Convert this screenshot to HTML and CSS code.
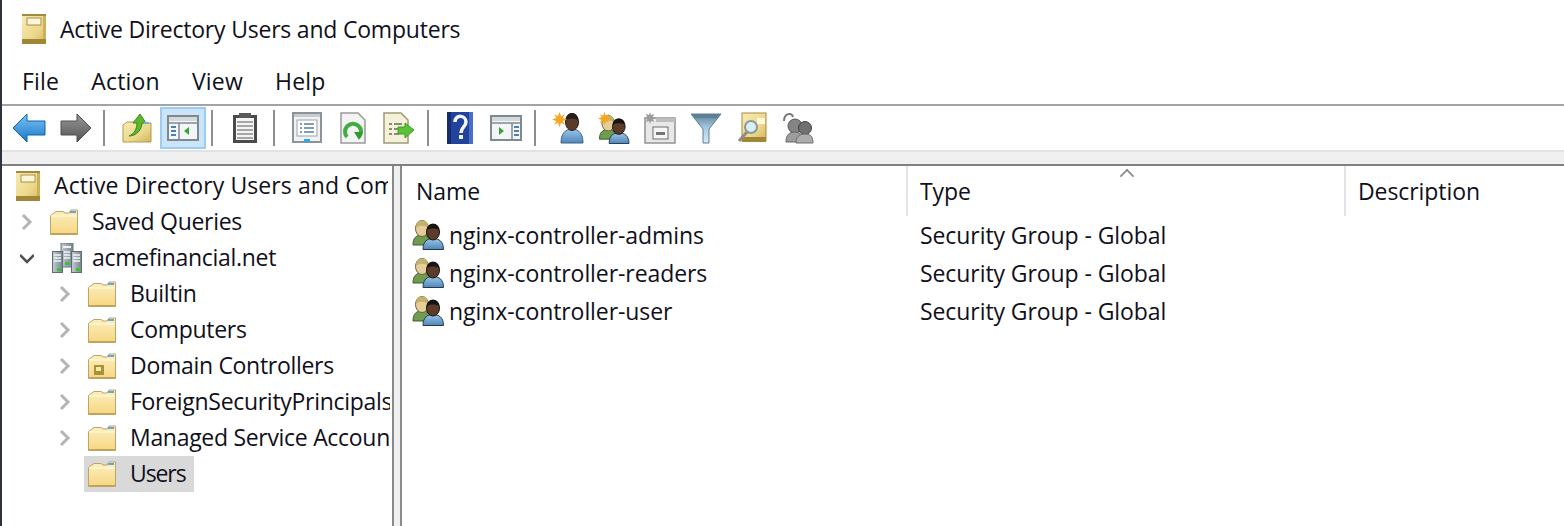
FILE: index.html
```html
<!DOCTYPE html>
<html lang="en">
<head>
  <meta charset="UTF-8">
  <meta name="viewport" content="width=device-width, initial-scale=1.0">
  <title>Active Directory Users and Computers</title>
  <link rel="stylesheet" href="styles.css">
</head>
<body>
  <svg class="defs" width="0" height="0">
    <defs>
      <linearGradient id="gold" x1="0" y1="0" x2="1" y2="1">
        <stop offset="0" stop-color="#f8ecb4"/><stop offset="0.6" stop-color="#ecd88c"/><stop offset="1" stop-color="#d2b45c"/>
      </linearGradient>
      <linearGradient id="fold" x1="0" y1="0" x2="0" y2="1">
        <stop offset="0" stop-color="#fdf0c0"/><stop offset="1" stop-color="#f6d682"/>
      </linearGradient>
      <linearGradient id="blue" x1="0" y1="0" x2="0" y2="1">
        <stop offset="0" stop-color="#7cc4f4"/><stop offset="1" stop-color="#1778c8"/>
      </linearGradient>
      <linearGradient id="grey" x1="0" y1="0" x2="0" y2="1">
        <stop offset="0" stop-color="#989898"/><stop offset="1" stop-color="#545454"/>
      </linearGradient>
      <linearGradient id="funnel" x1="0" y1="0" x2="0" y2="1">
        <stop offset="0" stop-color="#5f7f97"/><stop offset="0.5" stop-color="#a6cde4"/><stop offset="1" stop-color="#dceaf4"/>
      </linearGradient>
      <linearGradient id="shirt" x1="0" y1="0" x2="0" y2="1">
        <stop offset="0" stop-color="#9cc6ea"/><stop offset="1" stop-color="#4f86b8"/>
      </linearGradient>
      <linearGradient id="server" x1="0" y1="0" x2="1" y2="0">
        <stop offset="0" stop-color="#c4ced3"/><stop offset="1" stop-color="#76848c"/>
      </linearGradient>

      <symbol id="i-snapin" viewBox="0 0 24 30">
        <rect width="24" height="30" fill="url(#gold)"/>
        <rect x="21" width="3" height="30" fill="#cdb05a"/>
        <rect width="24" height="2" fill="#a58a3c"/>
        <rect y="25" width="24" height="5" fill="#a08636"/>
        <rect x="5" y="4" width="14" height="7" fill="#fbf6d8" stroke="#a8924c"/>
      </symbol>

      <symbol id="i-folder" viewBox="0 0 28 26">
        <path d="M.5 25.500V6.500L6 2.500h7l2 1.500h4l2-3h6.500v24.500z" fill="url(#fold)" stroke="#bfa468"/>
        <path d="M1 7h26" stroke="#fff6d2" stroke-width="1.500"/>
        <rect x="20" y="2" width="6" height="2" fill="#5aa9e6"/>
        <rect x=".5" y="24" width="27" height="1.500" fill="#c4a05a"/>
      </symbol>

      <symbol id="i-dc-folder" viewBox="0 0 28 26">
        <use href="#i-folder"/>
        <rect x="6" y="12" width="10" height="10" fill="#a8923a"/>
        <rect x="8" y="14" width="5" height="4" fill="#f1e9a6"/>
      </symbol>

      <symbol id="i-domain" viewBox="0 0 30 30">
        <rect x="9" y="0" width="12" height="24" fill="url(#server)" stroke="#6a777e"/>
        <rect x="11" y="3" width="8" height="2" fill="#eef2f3"/>
        <rect x="0.500" y="8.500" width="10" height="21" fill="url(#server)" stroke="#5f6c73"/>
        <rect x="19.500" y="8.500" width="10" height="21" fill="url(#server)" stroke="#5f6c73"/>
        <path d="M2 12h7M2 15h7M2 18h7M21 12h7M21 15h7M21 18h7M12 9h6M12 12h6M12 15h6" stroke="#f2f5f6" stroke-width="1.500"/>
        <rect x="5" y="25" width="4" height="3" fill="#36c52f"/>
        <rect x="24" y="25" width="4" height="3" fill="#36c52f"/>
        <rect x="13" y="19" width="4" height="3" fill="#36c52f"/>
      </symbol>

      <symbol id="i-group" viewBox="0 0 32 30">
        <path d="M1 25c0-7 3-10 9-10s9 3 9 10z" fill="#6f9c50" stroke="#38602a"/>
        <ellipse cx="10" cy="8.500" rx="6.500" ry="8" fill="#e6cd9c" stroke="#6e6238"/>
        <path d="M4 8c0-6 3-7.500 6-7.500s6 1.500 6 7.500c-3-3-9-3-12 0z" fill="#c4b26c"/>
        <path d="M11 29.500c0-8 4-11 10-11s10.500 3 10.500 11z" fill="url(#shirt)" stroke="#26394a"/>
        <ellipse cx="21" cy="12" rx="6.500" ry="8" fill="#5d3b2a" stroke="#1a110c"/>
        <path d="M15 10c0-5 3-6 6-6s6 1 6 6c-3-2-9-2-12 0z" fill="#181412"/>
      </symbol>

      <symbol id="i-back" viewBox="0 0 34 30">
        <path d="M1 15 15 1v7h18v14H15v7z" fill="url(#blue)" stroke="#0f62a8"/>
      </symbol>
      <symbol id="i-fwd" viewBox="0 0 34 30">
        <path d="M33 15 19 1v7H3v14h16v7z" fill="url(#grey)" stroke="#4e4e4e"/>
      </symbol>
      <symbol id="i-up" viewBox="0 0 30 30">
        <path d="M1 29V12l4-3h8l2 1h14v19z" fill="url(#gold)" stroke="#b3994f"/>
        <path d="M7 23c5-2 8-7 8-13h-4l7-9 6 9h-4c0 6-5 13-13 13z" fill="#5fb52c" stroke="#3a8a18"/>
        <rect x="22" y="9" width="5" height="2" fill="#6fb2e6"/>
      </symbol>
      <symbol id="i-win" viewBox="0 0 32 26">
        <rect x="1" y="1" width="30" height="24" fill="#f3f5f6" stroke="#7e8a92" stroke-width="2"/>
        <rect x="2" y="2" width="28" height="4" fill="#d4d9dc"/>
        <path d="M2 8h28" stroke="#7e8a92" stroke-width="1.500"/>
      </symbol>
      <symbol id="i-tree" viewBox="0 0 32 26">
        <use href="#i-win"/>
        <path d="M12 8v16" stroke="#7e8a92" stroke-width="1.500"/>
        <path d="M4 12h5M4 16h5M4 20h5" stroke="#4f80ad" stroke-width="2"/>
        <path d="M22 12v8l-5-4z" fill="#35a53a"/>
      </symbol>
      <symbol id="i-cols" viewBox="0 0 32 26">
        <use href="#i-win"/>
        <path d="M22 8v16" stroke="#7e8a92" stroke-width="1.500"/>
        <path d="M24 12h5M24 16h5M24 20h5" stroke="#4f80ad" stroke-width="2"/>
        <path d="M9 12v8l5-4z" fill="#35a53a"/>
      </symbol>
      <symbol id="i-clip" viewBox="0 0 24 30">
        <rect x="1.500" y="3.500" width="21" height="25" fill="#f4f4f4" stroke="#4a4a4a" stroke-width="3"/>
        <rect x="6" y="0" width="12" height="5" fill="#5a5a5a"/>
        <path d="M4 9h16M4 13h16M4 17h16M4 21h16M4 25h16" stroke="#a6a6a6" stroke-width="2"/>
      </symbol>
      <symbol id="i-props" viewBox="0 0 30 32">
        <rect x="1" y="1" width="28" height="29" fill="#f0f2f4" stroke="#8c949a" stroke-width="2"/>
        <rect x="2" y="2" width="26" height="3" fill="#c6ccd0"/>
        <rect x="5" y="8" width="20" height="16" fill="#fff" stroke="#9aa2a8"/>
        <path d="M8 12h2M12 12h10M8 16h2M12 16h10M8 20h2M12 20h10" stroke="#5a7d9a" stroke-width="1.500"/>
        <rect x="12" y="27" width="6" height="3" fill="#2aa8e8"/>
      </symbol>
      <symbol id="i-refresh" viewBox="0 0 26 32">
        <path d="M1 1h17l7 7v23H1z" fill="#f3f3f3" stroke="#9a9a9a" stroke-width="1.500"/>
        <path d="M7 25a8 8 0 1 1 12 0" fill="none" stroke="#3fae3f" stroke-width="4"/>
        <path d="M14 20h9l-4 8z" fill="#2f9a30"/>
      </symbol>
      <symbol id="i-export" viewBox="0 0 32 32">
        <path d="M1 1h17l7 7v23H1z" fill="#f5f1d8" stroke="#a09a7a" stroke-width="1.500"/>
        <path d="M6 12h3M11 12h8M6 17h3M11 17h5M6 22h3M11 22h5" stroke="#6a6a5a" stroke-width="1.500"/>
        <path d="M31 18l-9-7v4h-7v7h7v4z" fill="#5cc23a" stroke="#3f9a26"/>
      </symbol>
      <symbol id="i-help" viewBox="0 0 26 32">
        <rect width="26" height="32" fill="#22439c"/>
        <rect x="0" y="0" width="4" height="32" fill="#152c6e"/>
        <rect x="22" y="0" width="4" height="32" fill="#4a6ec8"/>
        <path d="M8 10c0-8 11-7 11 0 0 5-5 5-5 11" fill="none" stroke="#f4f6fb" stroke-width="3.500"/>
        <rect x="12" y="23" width="4" height="4" fill="#f4f6fb"/>
      </symbol>
      <symbol id="i-burst" viewBox="0 0 14 14">
        <path d="M7 0l1.500 4L12 2l-2 3.500L14 7l-4 1.500L12 12 8.500 10 7 14l-1.500-4L2 12l2-3.500L0 7l4-1.500L2 2l3.500 2z" fill="#f6a623"/>
      </symbol>
      <symbol id="i-newuser" viewBox="0 0 32 32">
        <path d="M9 31c0-9 4-14 11-14s11 5 11 14z" fill="url(#shirt)" stroke="#3c6288"/>
        <ellipse cx="20" cy="10" rx="6.500" ry="8.500" fill="#5d3b2a" stroke="#241812"/>
        <path d="M14 8c0-5 3-7 6-7s6 2 6 7c-4-2-8-2-12 0z" fill="#26201c"/>
        <use href="#i-burst" x="0" y="0" width="15" height="15"/>
      </symbol>
      <symbol id="i-newgroup" viewBox="0 0 32 32">
        <use href="#i-group" x="0" y="3" width="32" height="29"/>
        <use href="#i-burst" x="0" y="0" width="13" height="13"/>
      </symbol>
      <symbol id="i-newou" viewBox="0 0 32 32">
        <path d="M1 31V6h30v25z" fill="#e8e8e8" stroke="#929292" stroke-width="1.500"/>
        <path d="M12 6h19v4H12z" fill="#bdbdbd"/>
        <rect x="9" y="15" width="15" height="12" fill="#f6f6f6" stroke="#6e6e6e"/>
        <rect x="12" y="20" width="9" height="3" fill="#777"/>
        <path d="M6 0l1 3 3-1-1 3 3 1-3 1 1 3-3-1-1 3-1-3-3 1 1-3-3-1 3-1-1-3 3 1z" fill="#9c9c9c"/>
      </symbol>
      <symbol id="i-filter" viewBox="0 0 30 32">
        <path d="M0 2h30L18 17v14h-6V17z" fill="url(#funnel)" stroke="#5d7d95"/>
        <path d="M1 2h28l-3 4H4z" fill="#5f7f97"/>
      </symbol>
      <symbol id="i-find" viewBox="0 0 30 32">
        <rect x="5" y="1" width="24" height="28" fill="url(#gold)" stroke="#a8893c"/>
        <rect x="5" y="25" width="24" height="5" fill="#a08636"/>
        <rect x="20" y="6" width="8" height="6" fill="#fdf8dc"/>
        <circle cx="14" cy="15" r="6" fill="#dbeef5" stroke="#8a9a9a" stroke-width="2"/>
        <path d="M10 20l-8 9" stroke="#8c8c8c" stroke-width="3"/>
      </symbol>
      <symbol id="i-addgroup" viewBox="0 0 32 32">
        <path d="M2 9c0-8 8-9 9-4" fill="none" stroke="#777" stroke-width="2"/>
        <circle cx="13" cy="14" r="7" fill="#858585" stroke="#555"/>
        <circle cx="23" cy="16" r="6.500" fill="#707070" stroke="#444"/>
        <path d="M4 30c0-7 3-10 9-10s7 3 7 10z" fill="#9c9c9c" stroke="#666"/>
        <path d="M14 31c0-6 3-9 9-9s8 3 8 9z" fill="#acacac" stroke="#6e6e6e"/>
      </symbol>
    </defs>
  </svg>

  <div class="window">
    <div class="titlebar">
      <svg class="title-icon"><use href="#i-snapin"/></svg>
      <span>Active Directory Users and Computers</span>
    </div>

    <div class="menubar">
      <span>File</span>
      <span>Action</span>
      <span>View</span>
      <span>Help</span>
    </div>

    <div class="toolbar">
      <div class="tool"><svg class="ic-back"><use href="#i-back"/></svg></div>
      <div class="tool"><svg class="ic-back"><use href="#i-fwd"/></svg></div>
      <div class="tool-sep"></div>
      <div class="tool"><svg class="ic-up"><use href="#i-up"/></svg></div>
      <div class="tool active"><svg class="ic-win"><use href="#i-tree"/></svg></div>
      <div class="tool-sep"></div>
      <div class="tool"><svg class="ic-clip"><use href="#i-clip"/></svg></div>
      <div class="tool-sep"></div>
      <div class="tool"><svg class="ic-square"><use href="#i-props"/></svg></div>
      <div class="tool"><svg class="ic-page"><use href="#i-refresh"/></svg></div>
      <div class="tool"><svg class="ic-square"><use href="#i-export"/></svg></div>
      <div class="tool-sep tight"></div>
      <div class="tool"><svg class="ic-page"><use href="#i-help"/></svg></div>
      <div class="tool"><svg class="ic-win"><use href="#i-cols"/></svg></div>
      <div class="tool-sep"></div>
      <div class="tool"><svg class="ic-square"><use href="#i-newuser"/></svg></div>
      <div class="tool"><svg class="ic-square"><use href="#i-newgroup"/></svg></div>
      <div class="tool"><svg class="ic-square"><use href="#i-newou"/></svg></div>
      <div class="tool"><svg class="ic-square"><use href="#i-filter"/></svg></div>
      <div class="tool"><svg class="ic-square"><use href="#i-find"/></svg></div>
      <div class="tool"><svg class="ic-square"><use href="#i-addgroup"/></svg></div>
    </div>

    <div class="strip"></div>

    <div class="panes">
      <div class="tree">
        <div class="tree-clip">
          <div class="node root">
            <svg class="ic-snapin"><use href="#i-snapin"/></svg>
            <span>Active Directory Users and Computers</span>
          </div>
          <div class="node lvl1">
            <svg class="chev"><path d="M3 2l7 7-7 7" fill="none" stroke="#b4b4b4" stroke-width="3"/></svg>
            <svg class="ic-folder"><use href="#i-folder"/></svg>
            <span>Saved Queries</span>
          </div>
          <div class="node lvl1">
            <svg class="chev"><path d="M0 6l7 7 7-7" fill="none" stroke="#505050" stroke-width="2.500"/></svg>
            <svg class="ic-domain"><use href="#i-domain"/></svg>
            <span>acmefinancial.net</span>
          </div>
          <div class="node lvl2">
            <svg class="chev"><path d="M3 2l7 7-7 7" fill="none" stroke="#b4b4b4" stroke-width="3"/></svg>
            <svg class="ic-folder"><use href="#i-folder"/></svg>
            <span>Builtin</span>
          </div>
          <div class="node lvl2">
            <svg class="chev"><path d="M3 2l7 7-7 7" fill="none" stroke="#b4b4b4" stroke-width="3"/></svg>
            <svg class="ic-folder"><use href="#i-folder"/></svg>
            <span>Computers</span>
          </div>
          <div class="node lvl2">
            <svg class="chev"><path d="M3 2l7 7-7 7" fill="none" stroke="#b4b4b4" stroke-width="3"/></svg>
            <svg class="ic-folder"><use href="#i-dc-folder"/></svg>
            <span>Domain Controllers</span>
          </div>
          <div class="node lvl2">
            <svg class="chev"><path d="M3 2l7 7-7 7" fill="none" stroke="#b4b4b4" stroke-width="3"/></svg>
            <svg class="ic-folder"><use href="#i-folder"/></svg>
            <span>ForeignSecurityPrincipals</span>
          </div>
          <div class="node lvl2">
            <svg class="chev"><path d="M3 2l7 7-7 7" fill="none" stroke="#b4b4b4" stroke-width="3"/></svg>
            <svg class="ic-folder"><use href="#i-folder"/></svg>
            <span>Managed Service Accounts</span>
          </div>
          <div class="node lvl2">
            <div class="chev"></div>
            <div class="selected">
              <svg class="ic-folder"><use href="#i-folder"/></svg>
              <span>Users</span>
            </div>
          </div>
        </div>
      </div>

      <div class="splitter"></div>

      <div class="list">
        <div class="list-head">
          <div class="col col-name">Name</div>
          <div class="col col-type">Type<i class="sort"></i></div>
          <div class="col col-desc">Description</div>
        </div>
        <div class="row">
          <div class="cell-name"><svg class="ic-group"><use href="#i-group"/></svg><span>nginx-controller-admins</span></div>
          <div class="cell-type">Security Group - Global</div>
        </div>
        <div class="row">
          <div class="cell-name"><svg class="ic-group"><use href="#i-group"/></svg><span>nginx-controller-readers</span></div>
          <div class="cell-type">Security Group - Global</div>
        </div>
        <div class="row">
          <div class="cell-name"><svg class="ic-group"><use href="#i-group"/></svg><span>nginx-controller-user</span></div>
          <div class="cell-type">Security Group - Global</div>
        </div>
      </div>
    </div>
  </div>
</body>
</html>
```

FILE: styles.css
```css
html, body {
  margin: 0;
  height: 100%;
}
body {
  font-family: "Open Sans", "Noto Sans", sans-serif;
  font-size: 23px;
  letter-spacing: -0.3px;
  color: #10101a;
  background: #fff;
  overflow: hidden;
}
.defs {
  display: block;
  position: absolute;
}
.window {
  height: 526px;
  display: flex;
  flex-direction: column;
  border-left: 2px solid #2e333b;
  overflow: hidden;
}

.titlebar {
  height: 60px;
  flex: none;
  display: flex;
  align-items: center;
  gap: 14px;
  padding-left: 20px;
  letter-spacing: -0.21px;
}
.titlebar span { padding-bottom: 2px; }
.title-icon {
  width: 24px;
  height: 30px;
  margin-bottom: 2px;
}

.menubar {
  height: 44px;
  flex: none;
  display: flex;
  align-items: center;
  gap: 32px;
  padding-left: 20px;
  letter-spacing: 0.2px;
}
.menubar span { padding-bottom: 2px; }

.toolbar {
  height: 44px;
  flex: none;
  display: flex;
  align-items: center;
  padding-left: 4px;
  border-top: 2px solid #a3a3a3;
  border-bottom: 2px solid #e2e2e2;
}
.tool {
  width: 46px;
  height: 42px;
  flex: none;
  display: flex;
  align-items: center;
  justify-content: center;
  box-sizing: border-box;
}
.tool.active {
  background: #cce4f8;
  border: 2px solid #99cdf5;
}
.tool-sep {
  width: 2px;
  height: 36px;
  flex: none;
  background: #8e8e8e;
  margin: 0 9px 0 5px;
}
.tool-sep.tight { margin-right: 8px; }
.ic-back { width: 34px; height: 30px; }
.ic-up { width: 30px; height: 30px; }
.ic-win { width: 32px; height: 26px; }
.ic-clip { width: 24px; height: 30px; }
.ic-square { width: 32px; height: 32px; }
.ic-page { width: 26px; height: 32px; }

.strip {
  height: 12px;
  flex: none;
  background: #f0f0f0;
}

.panes {
  flex: 1;
  display: flex;
  min-height: 0;
  border-top: 2px solid #7f8084;
}

.tree {
  width: 392px;
  flex: none;
  box-sizing: border-box;
  padding: 2px 2px 0 14px;
  border-right: 2px solid #8a8a8a;
}
.tree-clip {
  height: 100%;
  overflow: hidden;
}
.node {
  height: 36px;
  display: flex;
  align-items: center;
  white-space: nowrap;
}
.node span { padding-bottom: 2px; }
.node.lvl1 { padding-left: 4px; }
.node.lvl2 { padding-left: 42px; }
.root svg { margin-right: 14px; }
.root span {
  width: 334px;
  overflow: hidden;
  letter-spacing: 0.1px;
}
.ic-snapin { width: 24px; height: 30px; flex: none; }
.chev {
  width: 14px;
  height: 18px;
  flex: none;
  margin-right: 16px;
}
.ic-folder {
  width: 28px;
  height: 26px;
  flex: none;
  margin-right: 14px;
}
.ic-domain {
  width: 30px;
  height: 30px;
  flex: none;
  margin: 0 10px 0 2px;
}
.selected {
  display: flex;
  align-items: center;
  height: 36px;
  margin-left: -4px;
  padding: 0 8px 0 4px;
  background: #d9d9d9;
}
.selected span { letter-spacing: -1.1px; }

.splitter {
  width: 6px;
  flex: none;
  background: #f0f0f0;
}

.list {
  flex: 1;
  min-width: 0;
  border-left: 2px solid #8a8a8a;
  letter-spacing: -0.08px;
}
.list-head {
  display: grid;
  grid-template-columns: 506px 438px 1fr;
  height: 50px;
}
.col {
  position: relative;
  display: flex;
  align-items: center;
  padding-left: 12px;
  border-right: 2px solid #e4e4e4;
}
.col-name { padding-left: 14px; }
.col-desc { border-right: 0; }
.sort {
  position: absolute;
  top: 4px;
  left: 50%;
  width: 10px;
  height: 10px;
  margin-left: -5px;
  border-top: 2px solid #8a8a8a;
  border-left: 2px solid #8a8a8a;
  transform: rotate(45deg) scale(0.85);
}

.row {
  display: grid;
  grid-template-columns: 506px 438px;
  height: 38px;
  align-items: center;
}
.cell-name {
  display: flex;
  align-items: center;
  gap: 5px;
  padding-left: 10px;
}
.cell-type { padding-left: 12px; }
.ic-group {
  width: 32px;
  height: 30px;
  flex: none;
}
```
